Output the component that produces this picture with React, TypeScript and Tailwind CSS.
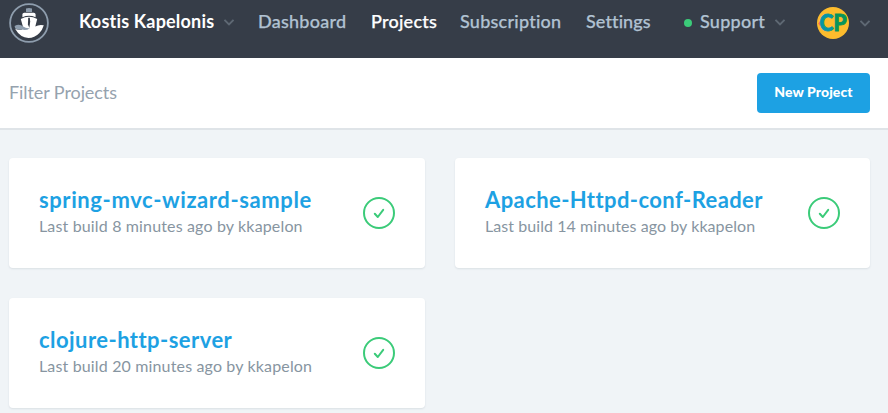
import React from "react";

const projects = [
  { name: "spring-mvc-wizard-sample", build: "Last build 8 minutes ago by kkapelon", nameClass: "tracking-[0.6px]", buildClass: "tracking-[0.15px]" },
  { name: "Apache-Httpd-conf-Reader", build: "Last build 14 minutes ago by kkapelon", nameClass: "tracking-[0.41px]", buildClass: "tracking-[0.07px]" },
  { name: "clojure-http-server", build: "Last build 20 minutes ago by kkapelon", nameClass: "tracking-[0.45px]", buildClass: "tracking-[0.15px]" },
];

function Chevron({ className = "" }: { className?: string }) {
  return (
    <svg className={`shrink-0 ${className}`} width="10" height="7" viewBox="0 0 10 7" fill="none" stroke="#5e6873" strokeWidth="1.9">
      <path d="M0.5 0.8 5 5.3 9.5 0.8" />
    </svg>
  );
}

function Logo() {
  return (
    <svg className="mt-[3px] shrink-0" width="40" height="40" viewBox="0 0 40 40">
      <circle cx="20" cy="20" r="18.9" fill="none" stroke="#8e9dad" strokeWidth="1.8" />
      <path d="M17 5.5Q20 4.4 23 5.5V9H17Z" fill="#8e9dad" />
      <path d="M13.4 11.3Q13.6 9.7 15.2 9.7H24.8Q26.4 9.7 26.6 11.3V14.2Q20 11.4 13.4 14.2Z" fill="#fff" />
      <path d="M11.8 16Q20 11.6 28.2 16L26.3 23.5Q30 21.2 34.8 22.3 33.5 27 30.2 30.2 25.5 35 19.5 35 11.2 34.7 6.2 26.1 9.5 27.2 13 26.6L14 24Z" fill="#fff" />
      <path d="M5.6 22.9Q10.5 20.4 14.2 23.5 17 25.8 21 25.2 17 28 12.7 26.6 8.7 27 6.2 25.6Z" fill="#8e9dad" />
      <path d="M19.2 14.7H20.8L21.2 18.5 20.4 25 18.9 21.5Z" fill="#363d48" />
    </svg>
  );
}

function Avatar() {
  return (
    <svg className="mt-[7px] shrink-0" width="32" height="32" viewBox="0 0 32 32">
      <circle cx="16" cy="16" r="16" fill="#fdbc2d" />
      <path d="M4 14 2.4 16.5 4 18.8" stroke="#f0602c" strokeWidth="1.8" fill="none" />
      <text x="2.6" y="24" fontFamily="Lato, sans-serif" fontWeight="900" fontSize="22.5" textLength="27" lengthAdjust="spacingAndGlyphs" strokeWidth="0.9">
        <tspan fill="#0796a4" stroke="#0796a4">C</tspan>
        <tspan fill="#07945c" stroke="#07945c">P</tspan>
      </text>
    </svg>
  );
}

function PassedIcon() {
  return (
    <svg className="mt-[39px] shrink-0" width="32" height="32" viewBox="0 0 32 32" fill="none" stroke="#3bcb79">
      <circle cx="16" cy="16" r="15" strokeWidth="2" />
      <path d="M11.8 16.8 14.8 20 20.2 12.9" strokeWidth="2" strokeLinecap="round" strokeLinejoin="round" />
    </svg>
  );
}

export default function App() {
  return (
    <div className="h-[413px] w-[888px] overflow-hidden bg-[#f0f4f7] font-['Lato',sans-serif]">
      <header className="flex h-[58px] items-start bg-[#363d48] pl-[9px] text-[18px] leading-[22px] font-medium whitespace-nowrap text-[#b1c2d2]">
        <Logo />
        <span className="mt-[10px] ml-[30px] w-[145px] font-bold tracking-[0.19px] text-white">Kostis Kapelonis</span>
        <Chevron className="mt-[19px]" />
        <nav className="mt-[10px] ml-[24px] flex tracking-[0.25px] [-webkit-text-stroke:0.25px_currentColor]">
          <a className="w-[113px]">Dashboard</a>
          <a className="w-[89px] text-white">Projects</a>
          <a className="w-[126px]">Subscription</a>
          <a className="w-[98px] tracking-[0.1px]">Settings</a>
        </nav>
        <span className="mt-[19px] size-2 shrink-0 rounded-full bg-[#3bcb79]" />
        <span className="mt-[10px] ml-2 w-[75px] tracking-[0.25px] [-webkit-text-stroke:0.25px_currentColor]">Support</span>
        <Chevron className="mt-[19px]" />
        <span className="ml-8 flex">
          <Avatar />
        </span>
        <Chevron className="mt-[20px] ml-[11px]" />
      </header>
      <section className="flex h-[72px] items-start justify-between border-b-2 border-[#dfe4e8] bg-white pr-[18px] pl-[9px]">
        <span className="mt-[23px] text-[18px] leading-[22px] tracking-[-0.08px] text-[#95a2ae]">Filter Projects</span>
        <button className="mt-[15px] h-[40px] w-[113px] rounded-[4px] bg-[#1da1e3] pb-[3px] text-[14px] font-black tracking-[0.08px] text-white">New Project</button>
      </section>
      <main className="grid grid-cols-[416px_415px] gap-[30px] px-[9px] pt-7">
        {projects.map((project) => (
          <article key={project.name} className="flex h-[110px] justify-between rounded-[4px] bg-white pr-[30px] pl-[30px] whitespace-nowrap shadow-[0_1px_2px_rgba(60,80,100,0.12)]">
            <div className="pt-[28px]">
              <h2 className={`text-[22px] leading-[28px] font-bold text-[#1da1e3] ${project.nameClass}`}>{project.name}</h2>
              <p className={`mt-[2px] text-[16px] leading-[20px] text-[#8795a1] ${project.buildClass}`}>{project.build}</p>
            </div>
            <PassedIcon />
          </article>
        ))}
      </main>
    </div>
  );
}
